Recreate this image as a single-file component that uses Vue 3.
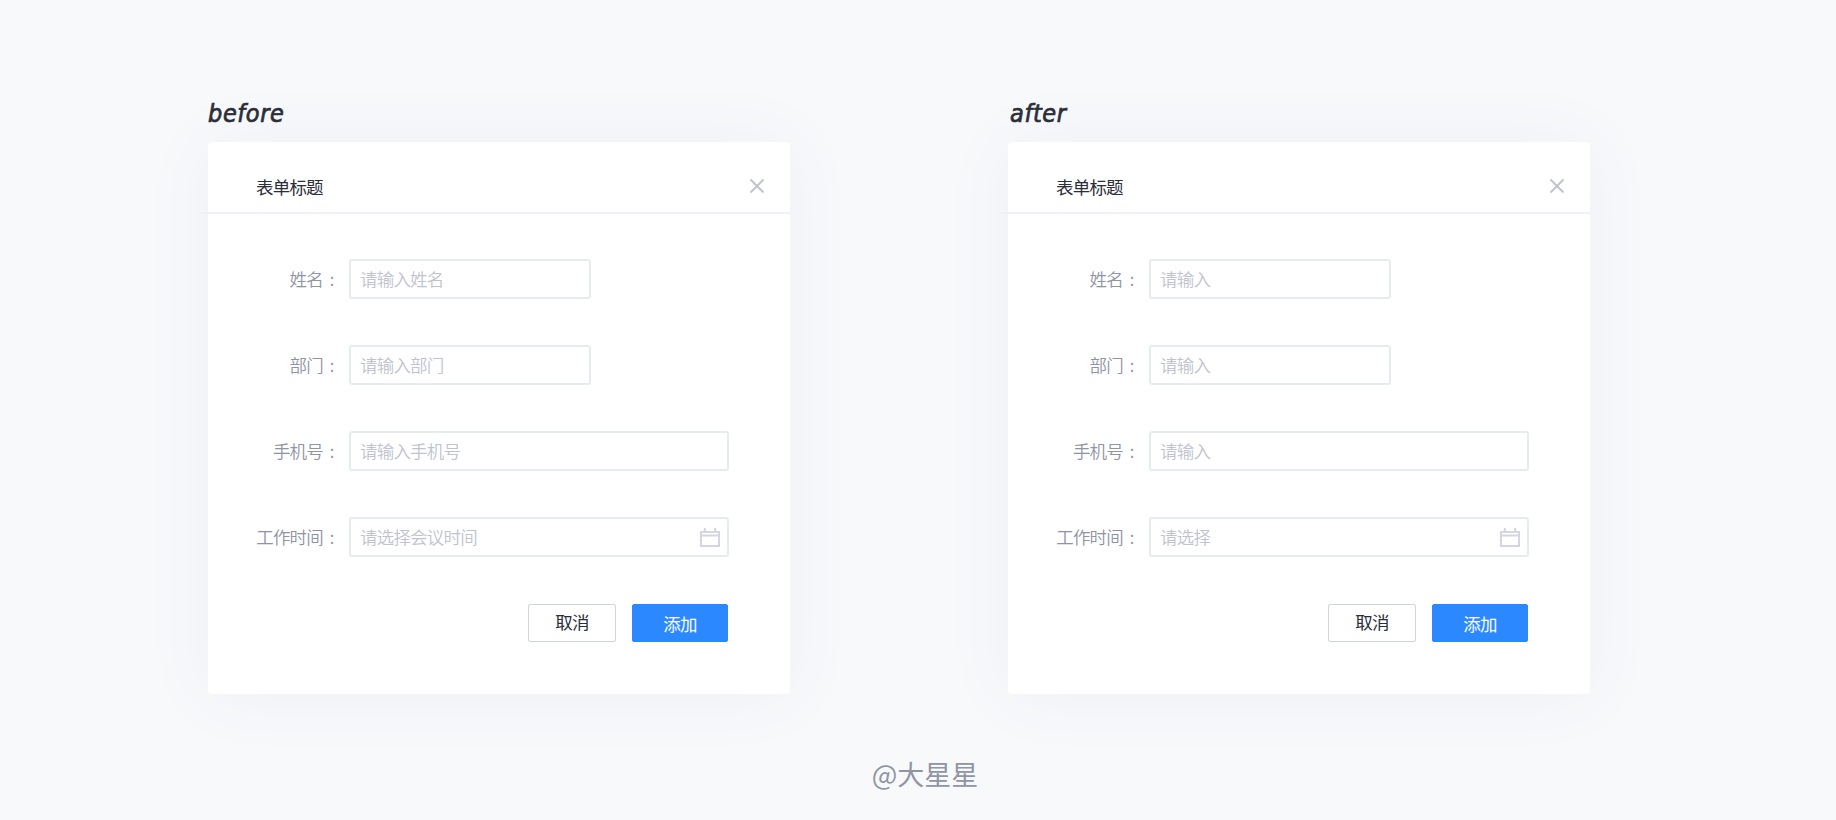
<template>
  <main class="page">
    <div class="compare">
      <section v-for="panel in panels" :key="panel.name" class="panel" :class="panel.name">
        <h2>{{ panel.name }}</h2>

        <form class="card" @submit.prevent>
          <header class="card-header">
            <h3>表单标题</h3>
            <button type="button" class="close" aria-label="关闭">
              <svg width="16" height="16" viewBox="0 0 16 16">
                <path d="M1.5 1.5 L14.5 14.5 M14.5 1.5 L1.5 14.5" />
              </svg>
            </button>
          </header>

          <div class="fields">
            <label v-for="field in panel.fields" :key="field.label" class="field">
              <span class="label">{{ field.label }}</span>
              <span class="colon">:</span>
              <span class="control" :class="{ wide: field.wide }">
                <input v-model="field.value" type="text" :placeholder="field.placeholder" />
                <svg v-if="field.date" class="calendar" width="20" height="20" viewBox="0 0 20 20">
                  <path d="M1 4 H19 V18 H1 Z M1 7.5 H19 M4.8 0 V4 M15.2 0 V4" />
                </svg>
              </span>
            </label>
          </div>

          <div class="actions">
            <button type="button" class="btn">取消</button>
            <button type="submit" class="btn primary">添加</button>
          </div>
        </form>
      </section>
    </div>

    <footer>@大星星</footer>
  </main>
</template>

<script setup>
import { ref } from 'vue'

function createFields(placeholders) {
  return [
    { label: '姓名', placeholder: placeholders[0], value: '' },
    { label: '部门', placeholder: placeholders[1], value: '' },
    { label: '手机号', placeholder: placeholders[2], value: '', wide: true },
    { label: '工作时间', placeholder: placeholders[3], value: '', wide: true, date: true }
  ]
}

const panels = ref([
  {
    name: 'before',
    fields: createFields(['请输入姓名', '请输入部门', '请输入手机号', '请选择会议时间'])
  },
  {
    name: 'after',
    fields: createFields(['请输入', '请输入', '请输入', '请选择'])
  }
])
</script>

<style>
body {
  margin: 0;
  background: #f8f9fb;
}
</style>

<style scoped>
.page {
  height: 820px;
  padding-top: 96px;
  box-sizing: border-box;
  overflow: hidden;
  background: #f8f9fb;
  font-family: "Noto Sans CJK SC", sans-serif;
  font-weight: 350;
}

.compare {
  display: flex;
  gap: 218px;
  padding-left: 208px;
}

.panel {
  width: 582px;
}

h2 {
  position: relative;
  z-index: 1;
  margin: 0;
  height: 46px;
  line-height: 36px;
  font-family: "DejaVu Sans Condensed", "DejaVu Sans", sans-serif;
  font-stretch: condensed;
  font-size: 25px;
  font-style: italic;
  font-weight: 400;
  letter-spacing: 0.6px;
  color: #2b2e38;
  -webkit-text-stroke: 0.7px #2b2e38;
}

.after h2 {
  padding-left: 2px;
}

.card {
  height: 552px;
  border-radius: 4px;
  background: #fff;
  box-shadow: 0 1px 70px rgba(60, 80, 130, 0.06);
}

.card-header {
  display: flex;
  justify-content: space-between;
  align-items: center;
  height: 72px;
  margin-left: -8px;
  padding: 18px 25px 0 56px;
  box-sizing: border-box;
  border-bottom: 2px solid #edf1f6;
}

h3 {
  margin: 0;
  font-size: 17.5px;
  font-weight: 400;
  letter-spacing: -0.8px;
  color: #2b2e38;
}

.close {
  display: flex;
  padding: 0;
  border: none;
  background: none;
  cursor: pointer;
}

.close path {
  stroke: #c0c4ce;
  stroke-width: 2;
}

.fields {
  display: flex;
  flex-direction: column;
  gap: 46px;
  padding-top: 45px;
}

.field {
  display: flex;
  align-items: center;
}

.label {
  width: 115px;
  padding-bottom: 1px;
  text-align: right;
  font-size: 17.5px;
  letter-spacing: -0.8px;
  color: #8f94a3;
}

.colon {
  width: 18px;
  margin-right: 8px;
  padding-bottom: 1px;
  text-align: center;
  font-size: 17px;
  color: #8f94a3;
}

.control {
  display: flex;
  align-items: center;
  width: 242px;
  height: 40px;
  padding: 0 7px 0 9px;
  box-sizing: border-box;
  border: 2px solid #e6ebf0;
  border-radius: 3px;
}

.control.wide {
  width: 380px;
}

input {
  flex: 1;
  min-width: 0;
  padding: 0 0 1px;
  border: none;
  outline: none;
  background: none;
  font: inherit;
  font-size: 17.5px;
  letter-spacing: -0.8px;
  color: #2b2e38;
}

input::placeholder {
  color: #c0c3cf;
  opacity: 1;
}

.calendar {
  margin-top: 2px;
  fill: none;
  stroke: #d4d5df;
  stroke-width: 2;
}

.actions {
  display: flex;
  justify-content: flex-end;
  gap: 16px;
  padding: 47px 62px 0 0;
}

.btn {
  width: 88px;
  height: 38px;
  padding: 0 0 4px;
  border: 1px solid #d0d3dc;
  border-radius: 2px;
  background: #fff;
  font: inherit;
  font-size: 17.5px;
  font-weight: 400;
  letter-spacing: -0.8px;
  color: #2b2e38;
  cursor: pointer;
}

.btn.primary {
  width: 96px;
  padding: 0;
  border-color: #2b88ff;
  background: #2b88ff;
  color: #fff;
}

footer {
  margin-top: 60px;
  padding-left: 14px;
  text-align: center;
  font-size: 27px;
  font-weight: 400;
  line-height: 40px;
  color: #9095a5;
}
</style>
